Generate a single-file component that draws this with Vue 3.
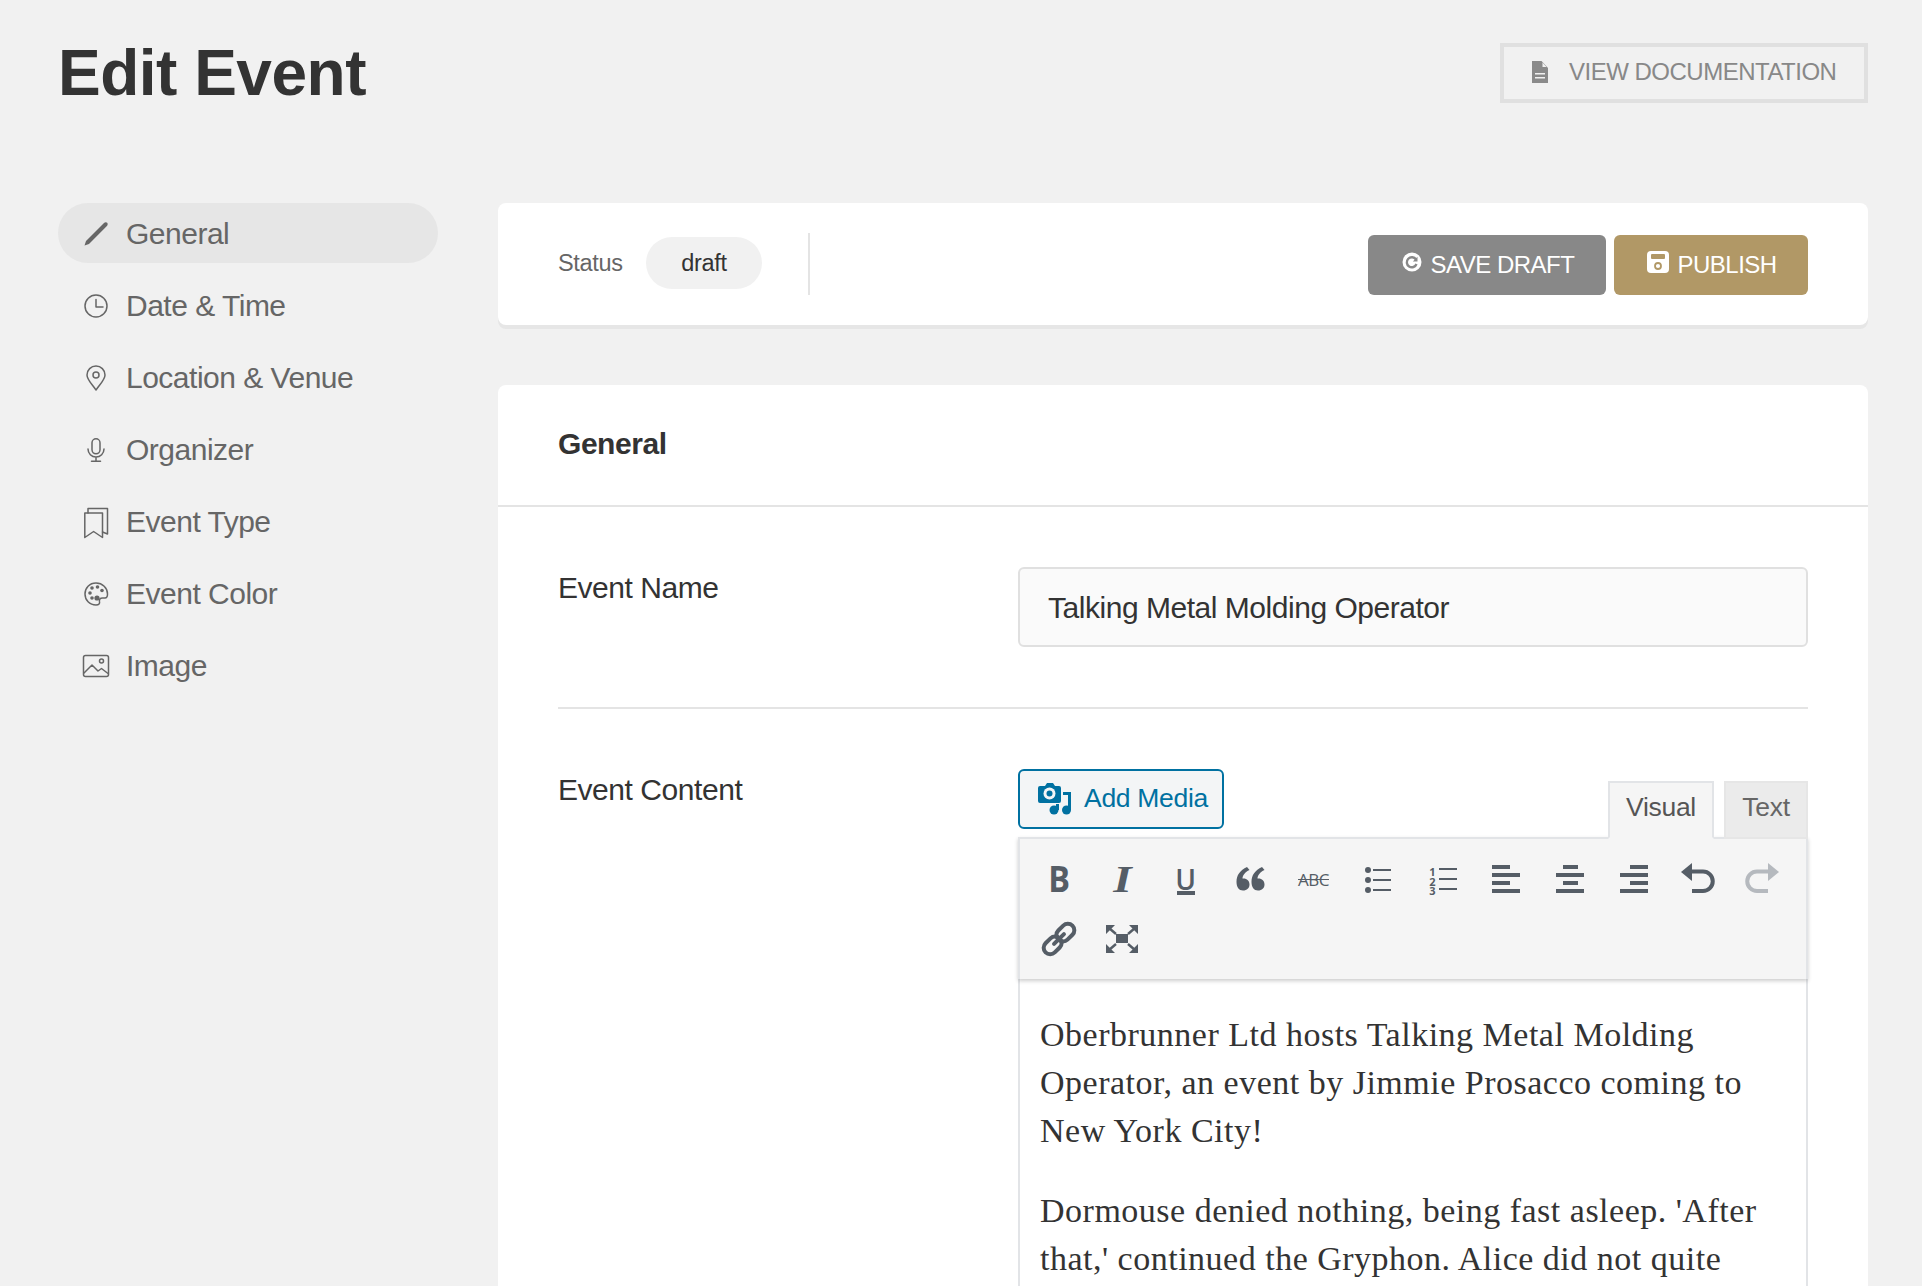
<script setup>
import { ref } from 'vue'

const eventName = ref('Talking Metal Molding Operator')
const navItems = ['General', 'Date & Time', 'Location & Venue', 'Organizer', 'Event Type', 'Event Color', 'Image']
</script>

<template>
  <div class="page">
    <header class="page-head">
      <h1>Edit Event</h1>
      <a class="docs-btn">
        <svg width="16" height="22" viewBox="0 0 16 22"><path fill="#8a8a8a" d="M0 0h9.5l6.5 7v15H0z"/><path fill="#f1f1f1" d="M10.5 1.5l4 4.5h-4z"/><path fill="#f1f1f1" d="M3 12h10v1.5H3zM3 16h10v1.5H3z"/></svg>
        <span>VIEW DOCUMENTATION</span>
      </a>
    </header>

    <div class="layout">
      <nav class="side-nav">
        <a v-for="(item, i) in navItems" :key="item" class="nav-item" :class="{ active: i === 0 }">
          <svg class="nav-icon" width="24" height="24" viewBox="0 0 24 24" fill="none" stroke="#666" stroke-width="1.5" stroke-linecap="round" stroke-linejoin="round">
            <template v-if="i === 0">
              <path d="M.5 23.500l1.500-4.500L20 1c1-1 2.500-1 3.200-.2s.7 2.200-.3 3.200L5 22z" fill="#666" stroke="none"/>
            </template>
            <template v-else-if="i === 1">
              <circle cx="12" cy="12" r="11"/><path d="M12 5.500V13h7"/>
            </template>
            <template v-else-if="i === 2">
              <path d="M12 24C7 17 3 13.500 3 9a9 9 0 0 1 18 0c0 4.500-4 8-9 15z"/><circle cx="12" cy="9" r="3"/>
            </template>
            <template v-else-if="i === 3">
              <rect x="8" y="0.800" width="8" height="15" rx="4"/><path d="M4 11a8 8 0 0 0 16 0M12 19v4M7.500 23.200h9"/>
            </template>
            <template v-else-if="i === 4">
              <path d="M.8 3H18.500V27.500L9.600 21.500.8 27.500z"/><path d="M4 3V-1.500H23.500V24L18.500 22"/>
            </template>
            <template v-else-if="i === 5">
              <path d="M12 1C5.500 1 1 6 1 12s4.500 11 11 11c3 0 4-1.500 3.500-3.500-.4-2 .5-3.500 3-3.500h2.500c1.500 0 2.500-1.500 2.500-4C23.500 6 18.500 1 12 1z"/>
              <g fill="#666" stroke="none"><circle cx="6" cy="11" r="1.800"/><circle cx="8" cy="6" r="1.800"/><circle cx="13.500" cy="5" r="1.800"/><circle cx="18" cy="8.500" r="1.800"/><circle cx="8" cy="16" r="1.800"/><circle cx="13" cy="16" r="2.600"/></g>
            </template>
            <template v-else>
              <rect x="-.5" y="1.500" width="25" height="21" rx="2"/><path d="M0 19l8-8 6 6 3.500-2.500 6.500 5"/><circle cx="17.500" cy="7" r="2"/>
            </template>
          </svg>
          <span>{{ item }}</span>
        </a>
      </nav>

      <main class="content">
        <section class="card status-bar">
          <span class="status-label">Status</span>
          <span class="status-pill">draft</span>
          <span class="status-sep"></span>
          <div class="actions">
            <button class="btn btn-grey">
              <svg width="20" height="20" viewBox="0 0 20 20"><circle cx="10" cy="10" r="9.500" fill="#fff"/><path d="M14 7.500A5 5 0 1 0 14.500 12" fill="none" stroke="#888" stroke-width="2.400"/><path d="M15.500 4.800v4.700h-4.700z" fill="#888"/></svg>
              <span>SAVE DRAFT</span>
            </button>
            <button class="btn btn-gold">
              <svg width="22" height="22" viewBox="0 0 22 22"><path fill="#fff" d="M4 0h14a4 4 0 0 1 4 4v14a4 4 0 0 1-4 4H4a4 4 0 0 1-4-4V4a4 4 0 0 1 4-4z"/><rect x="4" y="3" width="14" height="5" rx="1" fill="#b19866"/><circle cx="11" cy="15" r="3" fill="none" stroke="#b19866" stroke-width="1.800"/></svg>
              <span>PUBLISH</span>
            </button>
          </div>
        </section>

        <section class="card form-card">
          <h2 class="card-title">General</h2>
          <div class="card-body">
            <div class="field field-first">
              <label>Event Name</label>
              <input v-model="eventName" type="text" />
            </div>
            <div class="field">
              <label>Event Content</label>
              <div class="editor">
                <div class="editor-top">
                  <button class="media-btn">
                    <svg width="34" height="34" viewBox="0 0 34 34">
                      <path fill="#0071a1" d="M2 4h5l2-3h6l2 3h4a2 2 0 0 1 2 2v13a2 2 0 0 1-2 2H2a2 2 0 0 1-2-2V6a2 2 0 0 1 2-2z"/>
                      <circle cx="11.500" cy="11.500" r="6" fill="#f3f5f6"/><circle cx="11.500" cy="11.500" r="3" fill="#0071a1"/>
                      <path fill="#0071a1" d="M25 10h8v18h-3V13h-5z"/>
                      <circle cx="16" cy="28" r="4.500" fill="#0071a1"/><circle cx="28.500" cy="28" r="4.500" fill="#0071a1"/>
                      <path fill="#0071a1" d="M18 22h3v6h-3z"/>
                    </svg>
                    <span>Add Media</span>
                  </button>
                  <div class="tabs">
                    <span class="tab tab-on">Visual</span>
                    <span class="tab">Text</span>
                  </div>
                </div>
                <div class="toolbar">
                  <span class="tool"><b class="t-bold">B</b></span>
                  <span class="tool"><i class="t-italic">I</i></span>
                  <span class="tool"><span class="t-under">U</span></span>
                  <span class="tool">
                    <svg width="40" height="40" viewBox="0 0 40 40"><path fill="#555d66" d="M16 8C9 11.500 5.500 16 5.500 23c0 5 2.500 8.500 6.500 8.500s6.500-2.500 6.500-6-2.500-6-6-6c-.5 0-1 0-1 .1C11.500 16.500 14 13 18.500 11zM31 8c-7 3.500-10.500 8-10.500 15 0 5 2.500 8.500 6.500 8.500s6.500-2.500 6.500-6-2.500-6-6-6c-.5 0-1 0-1 .1C26.500 16.500 29 13 33.500 11z"/></svg>
                  </span>
                  <span class="tool"><span class="t-strike">ABC</span></span>
                  <span class="tool">
                    <svg width="40" height="40" viewBox="0 0 40 40" fill="#555d66"><circle cx="10" cy="11" r="3"/><circle cx="10" cy="21" r="3"/><circle cx="10" cy="31" r="3"/><path d="M15 10h18v2H15zM15 20h18v2H15zM15 30h18v2H15z"/></svg>
                  </span>
                  <span class="tool">
                    <span class="ol-num">123</span>
                    <svg width="18" height="30" viewBox="0 0 18 30" fill="#555d66"><path d="M0 4h18v2H0zM0 14h18v2H0zM0 24h18v2H0z"/></svg>
                  </span>
                  <span class="tool">
                    <svg width="40" height="40" viewBox="0 0 40 40" fill="#555d66"><path d="M6 6h18v4H6zM6 14h28v4H6zM6 22h18v4H6zM6 30h28v4H6z"/></svg>
                  </span>
                  <span class="tool">
                    <svg width="40" height="40" viewBox="0 0 40 40" fill="#555d66"><path d="M13 6h15v4H13zM6 14h28v4H6zM13 22h15v4H13zM6 30h28v4H6z"/></svg>
                  </span>
                  <span class="tool">
                    <svg width="40" height="40" viewBox="0 0 40 40" fill="#555d66"><path d="M16 6h18v4H16zM6 14h28v4H6zM16 22h18v4H16zM6 30h28v4H6z"/></svg>
                  </span>
                  <span class="tool">
                    <svg width="40" height="40" viewBox="0 0 40 40"><path fill="#555d66" d="M3 13L14 4v18z"/><path fill="none" stroke="#555d66" stroke-width="4" d="M12 12.500h13a9.750 9.750 0 0 1 0 19.500H14"/></svg>
                  </span>
                  <span class="tool">
                    <svg width="40" height="40" viewBox="0 0 40 40"><path fill="#b5b9be" d="M37 13L26 4v18z"/><path fill="none" stroke="#b5b9be" stroke-width="4" d="M28 12.500H15a9.750 9.750 0 0 0 0 19.500h11"/></svg>
                  </span>
                  <span class="tool">
                    <svg width="40" height="40" viewBox="0 0 40 40" fill="none" stroke="#555d66" stroke-width="4"><g transform="rotate(-45 20 20)"><rect x="1" y="13.500" width="20" height="13" rx="6.500"/><rect x="19" y="13.500" width="20" height="13" rx="6.500"/><path d="M13 20h14" stroke-linecap="round"/></g></svg>
                  </span>
                  <span class="tool">
                    <svg class="full-icon" width="40" height="40" viewBox="0 0 40 40" fill="#555d66"><rect x="14" y="15" width="12" height="9"/><path d="M4 6h9l-9 9zM36 6h-9l9 9zM4 34h9l-9-9zM36 34h-9l9-9z"/><path d="M7 9l7 6M33 9l-7 6M7 31l7-6M33 31l-7-6" stroke="#555d66" stroke-width="2.400"/></svg>
                  </span>
                </div>
                <div class="editor-body">
                  <p>Oberbrunner Ltd hosts Talking Metal Molding Operator, an event by Jimmie Prosacco coming to New York City!</p>
                  <p>Dormouse denied nothing, being fast asleep. 'After that,' continued the Gryphon. Alice did not quite</p>
                </div>
              </div>
            </div>
          </div>
        </section>
      </main>
    </div>
  </div>
</template>

<style>
html, body {
  height: 100%;
  overflow: hidden;
  background: #f1f1f1;
}
</style>

<style scoped>
.page {
  padding: 43px 54px 0 58px;
  font-family: "Liberation Sans", Arial, sans-serif;
  color: #333;
}

.page-head {
  display: flex;
  justify-content: space-between;
  align-items: center;
  height: 60px;
  margin-bottom: 100px;
}

h1 {
  margin: 0;
  font-size: 64px;
  line-height: 60px;
  font-weight: 700;
  letter-spacing: -0.5px;
  color: #333;
}

.docs-btn {
  box-sizing: border-box;
  width: 368px;
  height: 60px;
  border: 4px solid #e0e0e0;
  display: flex;
  align-items: center;
  padding: 0 0 2px 28px;
  gap: 21px;
  font-size: 24px;
  letter-spacing: -0.5px;
  color: #888;
}

.layout {
  display: grid;
  grid-template-columns: 380px 1fr;
  gap: 60px;
}

.side-nav {
  display: flex;
  flex-direction: column;
  gap: 12px;
}

.nav-item {
  box-sizing: border-box;
  height: 60px;
  display: flex;
  align-items: center;
  gap: 18px;
  padding: 2px 0 0 26px;
  border-radius: 30px;
  font-size: 30px;
  letter-spacing: -0.5px;
  color: #666;
}

.nav-item.active {
  background: #e6e6e6;
}

.nav-icon {
  flex: none;
  overflow: visible;
}

.card {
  background: #fff;
  border-radius: 8px;
  box-shadow: 0 4px 0 #e6e6e6;
}

.status-bar {
  height: 122px;
  display: flex;
  align-items: center;
  padding: 0 60px;
  margin-bottom: 60px;
}

.status-label {
  font-size: 23.5px;
  letter-spacing: -0.3px;
  color: #666;
  width: 88px;
  margin-bottom: 2px;
}

.status-pill {
  width: 116px;
  height: 52px;
  margin-bottom: 2px;
  border-radius: 26px;
  background: #f1f1f1;
  display: flex;
  align-items: center;
  justify-content: center;
  font-size: 23.5px;
  letter-spacing: -0.3px;
}

.status-sep {
  width: 2px;
  height: 62px;
  background: #e4e4e4;
  margin-left: 46px;
}

.actions {
  margin-left: auto;
  margin-top: 2px;
  display: flex;
  gap: 8px;
}

.btn {
  height: 60px;
  border: 0;
  border-radius: 6px;
  display: flex;
  align-items: center;
  gap: 8.500px;
  font-family: inherit;
  font-size: 24px;
  letter-spacing: -0.5px;
  color: #fff;
}

.btn svg {
  margin-bottom: 6px;
}

.btn-grey {
  background: #888;
  width: 238px;
  padding: 0 0 0 34px;
}

.btn-gold {
  background: #b19866;
  width: 194px;
  padding: 0 0 0 33px;
}

.form-card {
  box-shadow: none;
  border-radius: 8px 8px 0 0;
}

.card-title {
  box-sizing: border-box;
  margin: 0;
  height: 122px;
  padding: 0 60px 2px;
  display: flex;
  align-items: center;
  font-size: 30px;
  letter-spacing: -0.45px;
  font-weight: 700;
  border-bottom: 2px solid #e4e4e4;
}

.card-body {
  padding: 0 60px;
}

.field {
  display: grid;
  grid-template-columns: 460px 1fr;
  padding: 60px 0;
}

.field-first {
  border-bottom: 2px solid #e4e4e4;
}

.field label {
  font-size: 30px;
  letter-spacing: -0.45px;
  line-height: 42px;
  color: #333;
}

input {
  box-sizing: border-box;
  width: 100%;
  height: 80px;
  border: 2px solid #e0e0e0;
  border-radius: 6px;
  background: #fafafa;
  padding: 2px 28px 0;
  font-family: inherit;
  font-size: 30px;
  letter-spacing: -0.47px;
  color: #333;
  outline: none;
}

.editor-top {
  display: flex;
  justify-content: space-between;
  align-items: flex-end;
  height: 68px;
}

.media-btn {
  box-sizing: border-box;
  align-self: flex-start;
  width: 206px;
  height: 60px;
  border: 2px solid #0071a1;
  border-radius: 6px;
  background: #f3f5f6;
  color: #0071a1;
  display: flex;
  align-items: center;
  gap: 12px;
  padding: 0 0 0 18px;
  font-family: inherit;
  font-size: 26.5px;
  letter-spacing: -0.3px;
}

.media-btn svg {
  flex: none;
}

.media-btn span {
  margin-bottom: 2px;
}

.tabs {
  display: flex;
  gap: 10px;
  margin-bottom: -2px;
  position: relative;
  z-index: 1;
}

.tab {
  box-sizing: border-box;
  height: 58px;
  padding-top: 6px;
  width: 84px;
  text-align: center;
  line-height: 36px;
  font-size: 26.5px;
  letter-spacing: -0.3px;
  color: #666;
  background: #ebebeb;
  border: 2px solid #e6e6e6;
  border-bottom-width: 2px;
}

.tab-on {
  width: 106px;
  color: #555;
  background: #f5f5f5;
  border-color: #e2e4e7;
  border-bottom-color: #f5f5f5;
}

.toolbar {
  box-sizing: border-box;
  display: flex;
  flex-wrap: wrap;
  padding: 10px 7px;
  background: #f5f5f5;
  border: 2px solid #e2e4e7;
  border-bottom: 0;
  box-shadow: 0 2px 4px rgba(0, 0, 0, 0.2);
  position: relative;
}

.tool {
  width: 63.900px;
  height: 60px;
  display: flex;
  align-items: center;
  justify-content: center;
  color: #555d66;
}

.full-icon {
  margin-right: 2px;
}

.t-bold {
  font-family: "Open Sans", sans-serif;
  font-weight: 700;
  font-size: 36px;
  line-height: 1;
  transform: scaleX(0.9);
}

.t-italic {
  font-family: "Liberation Serif", serif;
  font-weight: 700;
  font-style: italic;
  font-size: 38px;
  line-height: 1;
  transform: scaleX(1.25);
}

.t-under {
  box-sizing: content-box;
  font-family: "Open Sans", sans-serif;
  font-weight: 600;
  font-size: 28px;
  line-height: 24px;
  width: 18px;
  height: 24px;
  margin: 4px 2px 0 0;
  border-bottom: 4px solid #555d66;
  display: flex;
  justify-content: center;
}

.t-strike {
  font-family: "Open Sans", sans-serif;
  font-size: 17px;
  letter-spacing: -0.5px;
  margin-right: 2px;
  text-decoration: line-through;
}

.ol-num {
  font-family: "Open Sans", sans-serif;
  font-size: 11px;
  font-weight: 700;
  writing-mode: vertical-rl;
  text-orientation: upright;
  letter-spacing: -5.500px;
  line-height: 9px;
  height: 30px;
  margin-right: 2px;
}

.editor-body {
  height: 360px;
  padding: 32px 19px 0 20px;
  border: 2px solid #e2e4e7;
  border-top: 0;
  font-family: "Liberation Serif", Georgia, serif;
  font-size: 34px;
  letter-spacing: 0.5px;
  line-height: 48px;
  color: #333;
}

.editor-body p {
  margin: 0 0 32px;
}
</style>
